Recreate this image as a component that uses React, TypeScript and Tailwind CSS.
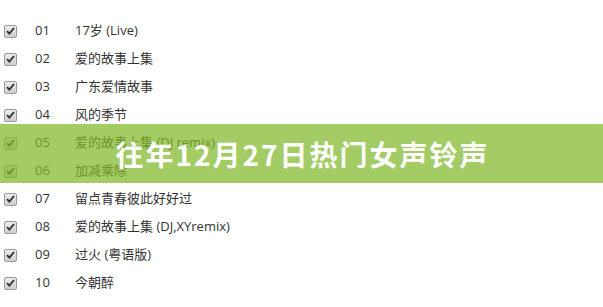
import React from 'react';

const songs = [
  { no: '01', title: '17岁 (Live)' },
  { no: '02', title: '爱的故事上集' },
  { no: '03', title: '广东爱情故事' },
  { no: '04', title: '风的季节' },
  { no: '05', title: '爱的故事上集 (DJ remix)' },
  { no: '06', title: '加减乘除' },
  { no: '07', title: '留点青春彼此好好过' },
  { no: '08', title: '爱的故事上集 (DJ,XYremix)' },
  { no: '09', title: '过火 (粤语版)' },
  { no: '10', title: '今朝醉' },
];

function CheckBox() {
  return (
    <span className="flex h-[13px] w-[13px] items-center justify-center rounded-[2px] border border-[#9a9a9a] bg-gradient-to-b from-[#ececec] to-[#cfcfcf]">
      <svg width="9" height="8" viewBox="0 0 9 8">
        <path d="M1 4.2 L3.4 6.6 L8 1" fill="none" stroke="#2f2f2f" strokeWidth="1.8" />
      </svg>
    </span>
  );
}

export default function App() {
  return (
    <div className="relative h-[307px] w-[603px] overflow-hidden bg-white font-['Open_Sans','Noto_Sans_CJK_SC',sans-serif] text-[13px] text-[#333]">
      <ul className="pt-[17px]">
        {songs.map((s) => (
          <li key={s.no} className="flex h-[28px] items-center">
            <span className="ml-[4px] w-[31px]">
              <CheckBox />
            </span>
            <span className="w-[40px]">{s.no}</span>
            <span>{s.title}</span>
          </li>
        ))}
      </ul>

      <div className="absolute left-0 right-0 top-[124px] flex h-[59px] items-center justify-center bg-[rgba(128,185,40,0.72)]">
        <h1 className="pl-[2px] font-['Noto_Sans_CJK_SC',sans-serif] text-[28px] leading-none font-bold tracking-[2px] text-white">
          往年12月27日热门女声铃声
        </h1>
      </div>
    </div>
  );
}
